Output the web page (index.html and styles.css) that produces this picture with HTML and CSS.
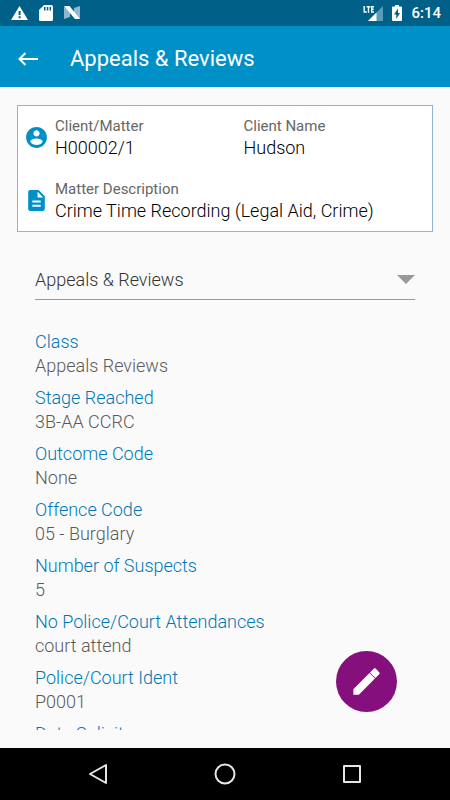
FILE: index.html
```html
<!DOCTYPE html>
<html lang="en">
  <head>
    <meta charset="utf-8">
    <meta name="viewport" content="width=device-width, initial-scale=1">
    <title>Appeals &amp; Reviews</title>
    <link rel="stylesheet" href="styles.css">
  </head>
  <body>
    <div class="status-bar">
      <svg width="17" height="14" viewBox="0 0 17 14">
        <path fill="#fff" d="M8.500 0L17 14H0z"/>
        <path fill="#006088" d="M7.600 5h2v4h-2zM7.600 10.200h2v2h-2z"/>
      </svg>
      <svg width="14" height="16" viewBox="0 0 14 16">
        <path fill="#fff" d="M5 0h7.500Q14 0 14 1.500v13q0 1.500-1.500 1.500h-11Q0 16 0 14.500V5z"/>
        <path fill="#006088" d="M5 2h1.500v3.500H5zM7.800 2h1.500v3.500H7.800zM10.600 2h1.500v3.500h-1.500z"/>
      </svg>
      <svg width="16" height="14" viewBox="0 0 16 14">
        <path fill="#8fb9ca" d="M0 1l6 2v8l-6 2zM16 0v13l-6-2V2z"/>
        <path fill="#fff" d="M0 0h5.500L16 13h-5z"/>
      </svg>
      <div class="status-right">
        <svg width="20" height="17" viewBox="0 0 20 17">
          <path fill="#5b9bb5" d="M20 1v15H5z"/>
          <path fill="#006088" d="M0 0h12v9H0z"/>
          <path fill="#fff" d="M13.500 7.500V16H5z"/>
          <path fill="none" stroke="#fff" stroke-width="1.400" d="M1.200 1v6h2.500M3.600 1.700h3.800M5.500 1.700v6M11 1.700H8.700v5.300H11M8.700 4.300h2"/>
        </svg>
        <svg width="10" height="16" viewBox="0 0 10 16">
          <path fill="#fff" d="M3 0h4v1.500h2q1 0 1 1V15q0 1-1 1H1q-1 0-1-1V2.500q0-1 1-1h2z"/>
          <path fill="#006088" d="M6 3.500L2 9.500h2.300V14L8 8H6z"/>
        </svg>
        <span>6:14</span>
      </div>
    </div>

    <header class="toolbar">
      <button class="back" aria-label="Back">
        <svg width="20" height="14" viewBox="0 0 20 14" fill="none" stroke="#fff" stroke-width="2">
          <path d="M20 7H1.500M7.500 1l-6 6 6 6"/>
        </svg>
      </button>
      <h1>Appeals &amp; Reviews</h1>
    </header>

    <main>
      <section class="card">
        <div class="card-row">
          <svg width="25" height="25" viewBox="0 0 24 24" fill="#0090c8">
            <path d="M12 2C6.480 2 2 6.480 2 12s4.480 10 10 10 10-4.480 10-10S17.520 2 12 2zm0 3c1.660 0 3 1.340 3 3s-1.340 3-3 3-3-1.340-3-3 1.340-3 3-3zm0 14.200c-2.500 0-4.710-1.280-6-3.220.030-1.990 4-3.080 6-3.080 1.990 0 5.970 1.090 6 3.080-1.290 1.940-3.500 3.220-6 3.220z"/>
          </svg>
          <dl>
            <div>
              <dt>Client/Matter</dt>
              <dd>H00002/1</dd>
            </div>
            <div>
              <dt>Client Name</dt>
              <dd>Hudson</dd>
            </div>
          </dl>
        </div>
        <div class="card-row">
          <svg width="25" height="25" viewBox="0 0 24 24" fill="#0090c8">
            <path d="M14 2H6c-1.100 0-1.990.9-1.990 2L4 20c0 1.100.890 2 1.990 2H18c1.100 0 2-.9 2-2V8l-6-6zm2 16H8v-2h8v2zm0-4H8v-2h8v2zm-3-5V3.500L18.500 9H13z"/>
          </svg>
          <dl>
            <div class="wide">
              <dt>Matter Description</dt>
              <dd>Crime Time Recording (Legal Aid, Crime)</dd>
            </div>
          </dl>
        </div>
      </section>

      <div class="picker">
        <select aria-label="Form">
          <option>Appeals &amp; Reviews</option>
        </select>
        <svg width="18" height="9" viewBox="0 0 18 9"><path fill="#999" d="M0 0h18L9 9z"/></svg>
      </div>

      <dl class="fields">
        <dt>Class</dt>
        <dd>Appeals Reviews</dd>
        <dt>Stage Reached</dt>
        <dd>3B-AA CCRC</dd>
        <dt>Outcome Code</dt>
        <dd>None</dd>
        <dt>Offence Code</dt>
        <dd>05 - Burglary</dd>
        <dt>Number of Suspects</dt>
        <dd>5</dd>
        <dt>No Police/Court Attendances</dt>
        <dd>court attend</dd>
        <dt>Police/Court Ident</dt>
        <dd>P0001</dd>
        <dt>Date Solicitor</dt>
      </dl>

      <button class="fab" aria-label="Edit">
        <svg width="35" height="35" viewBox="0 0 24 24" fill="#fff">
          <path d="M3 17.250V21h3.750L17.810 9.940l-3.750-3.750L3 17.250zM20.710 7.040c.390-.390.390-1.020 0-1.410l-2.340-2.340c-.390-.390-1.020-.390-1.410 0l-2.600 2.600 3.750 3.750 2.600-2.600z"/>
        </svg>
      </button>
    </main>

    <nav class="nav-bar">
      <button aria-label="Back">
        <svg width="22" height="22" viewBox="0 0 22 22" fill="none" stroke="#e6e6e6" stroke-width="2" stroke-linejoin="round">
          <path d="M19 2v18L3 11z"/>
        </svg>
      </button>
      <button aria-label="Home">
        <svg width="22" height="22" viewBox="0 0 22 22" fill="none" stroke="#e6e6e6" stroke-width="2">
          <circle cx="11" cy="11" r="9.500"/>
        </svg>
      </button>
      <button aria-label="Recent apps">
        <svg width="22" height="22" viewBox="0 0 22 22" fill="none" stroke="#e6e6e6" stroke-width="2" stroke-linejoin="round">
          <path d="M3 3h16v16H3z"/>
        </svg>
      </button>
    </nav>
  </body>
</html>
```
FILE: styles.css
```css
* {
  box-sizing: border-box;
}

body {
  margin: 0;
  height: 100vh;
  display: flex;
  flex-direction: column;
  background: #fafafa;
  font-family: Roboto, "Liberation Sans", sans-serif;
  font-size: 18px;
  font-weight: 300;
}

button {
  display: flex;
  padding: 0;
  border: 0;
  background: none;
  cursor: pointer;
}

svg {
  display: block;
  flex: none;
}

dl, dd {
  margin: 0;
}

.status-bar {
  display: flex;
  align-items: center;
  gap: 11px;
  height: 26px;
  padding: 0 9px 0 11px;
  background: #006088;
  color: #fff;
}

.status-right {
  display: flex;
  align-items: center;
  gap: 9px;
  margin-left: auto;
  font-size: 15px;
  font-weight: 500;
}

.toolbar {
  display: flex;
  align-items: center;
  gap: 32px;
  height: 61px;
  padding: 4px 18px 0;
  background: #0090c8;
  color: #fff;
}

.toolbar h1 {
  margin: 0;
  font-size: 22px;
  font-weight: 400;
}

main {
  position: relative;
  flex: 1;
  min-height: 0;
  display: flex;
  flex-direction: column;
  padding: 18px 17px;
}

.card {
  display: flex;
  flex-direction: column;
  gap: 19px;
  padding: 9px 0 9px 6px;
  border: 1px solid #8fb4d4;
  background: #fff;
}

.card-row {
  display: flex;
  align-items: center;
  gap: 6px;
}

.card dl {
  flex: 1;
  display: grid;
  grid-template-columns: 1fr 1fr;
  line-height: 22px;
}

.card .wide {
  grid-column: 1 / 3;
}

.card dt {
  font-size: 15px;
  font-weight: 400;
  color: #666;
}

.card dd {
  color: #000;
}

.picker {
  display: grid;
  align-items: center;
  margin: 28px 18px 0;
  border-bottom: 1px solid #999;
}

.picker select,
.picker svg {
  grid-area: 1 / 1;
}

.picker select {
  appearance: none;
  height: 39px;
  padding: 0;
  border: 0;
  background: none;
  font: inherit;
  color: #333;
}

.picker svg {
  justify-self: end;
  pointer-events: none;
}

.fields {
  flex: 1;
  min-height: 0;
  margin: 30px 18px 0;
  overflow-y: auto;
  scrollbar-width: none;
  line-height: 24px;
}

.fields dt {
  color: #0078b4;
}

.fields dd {
  margin-bottom: 8px;
  color: #5a5a5a;
}

.fab {
  position: absolute;
  right: 53px;
  bottom: 36px;
  width: 61px;
  height: 61px;
  align-items: center;
  justify-content: center;
  border-radius: 50%;
  background: #850f7d;
}

.nav-bar {
  display: flex;
  justify-content: center;
  gap: 105px;
  height: 52px;
  background: #000;
}

.nav-bar button {
  align-items: center;
}
```
